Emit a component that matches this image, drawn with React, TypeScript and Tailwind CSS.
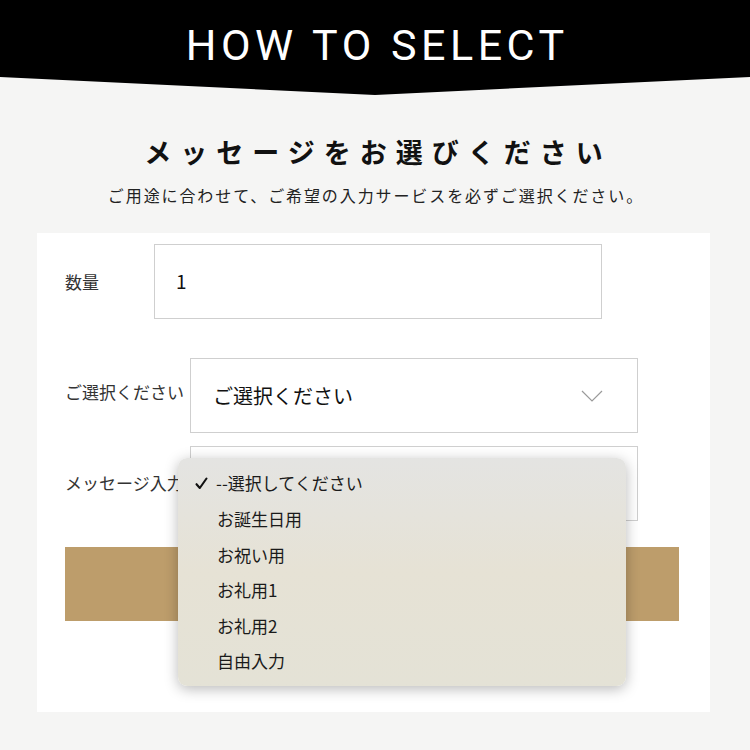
import React from "react";

const jp = { fontFamily: '"Noto Sans CJK JP", "Noto Sans", sans-serif' };

function Chevron() {
  return (
    <svg width="22" height="12" viewBox="0 0 22 12" fill="none">
      <path d="M1 1 L11 11 L21 1" stroke="#9a9a9a" strokeWidth="1.2" />
    </svg>
  );
}

function Check() {
  return (
    <svg width="13" height="13" viewBox="0 0 13 13" fill="none">
      <path d="M1.5 7.2 L4.8 11 L11.5 1.5" stroke="#111" strokeWidth="2.1" strokeLinecap="round" strokeLinejoin="round" />
    </svg>
  );
}

export default function App() {
  const options = ["お誕生日用", "お祝い用", "お礼用1", "お礼用2", "自由入力"];
  return (
    <div className="w-[750px] h-[750px] overflow-hidden bg-[#f5f5f4] relative" style={jp}>
      {/* header */}
      <div className="h-[95px] bg-black [clip-path:polygon(0_0,100%_0,100%_77px,50%_95px,0_77px)] flex justify-center">
        <div
          className="mt-[17px] h-[56px] leading-[56px] text-white text-[43px] tracking-[0.105em] pl-[0.105em]"
          style={{ fontFamily: 'Roboto, "Liberation Sans", sans-serif' }}
        >
          HOW TO SELECT
        </div>
      </div>

      <div className="mt-[39px] text-center text-[27px] leading-[36px] font-bold text-[#111] tracking-[9px] pl-[6px]">
        メッセージをお選びください
      </div>
      <div className="mt-[13px] text-center text-[16px] leading-[24px] text-[#222] tracking-[1.9px] pl-[1.9px]">
        ご用途に合わせて、ご希望の入力サービスを必ずご選択ください。
      </div>

      {/* panel */}
      <div className="relative mt-[26px] ml-[37px] w-[673px] h-[479px] bg-white pt-[11px] pl-[28px]">
        {/* row 1 */}
        <div className="flex items-center">
          <div className="w-[89px] text-[17px] text-[#333]">数量</div>
          <div className="w-[448px] h-[75px] border border-[#cfcfcf] bg-white flex items-center pl-[21px] text-[19px] text-[#111]">
            1
          </div>
        </div>

        {/* row 2 */}
        <div className="flex items-center mt-[39px]">
          <div className="w-[125px] text-[17px] text-[#333] whitespace-nowrap overflow-visible -mt-[8px]">ご選択ください</div>
          <div className="w-[448px] h-[75px] border border-[#cfcfcf] bg-white flex items-center justify-between pl-[22px] pr-[34px]">
            <span className="text-[20px] text-[#111]">ご選択ください</span>
            <Chevron />
          </div>
        </div>

        {/* row 3 */}
        <div className="flex items-center mt-[13px]">
          <div className="w-[125px] text-[17px] text-[#333] whitespace-nowrap overflow-hidden -mt-[2px]">メッセージ入力</div>
          <div className="w-[448px] h-[75px] border border-[#cfcfcf] bg-white"></div>
        </div>

        {/* button */}
        <div className="mt-[26px] w-[614px] h-[74px] bg-[#bd9d6b]"></div>

        {/* dropdown overlay */}
        <div className="absolute left-[141px] top-[225px] w-[448px] h-[228px] rounded-[9px] bg-gradient-to-b from-[#e4e4e2] via-[#e6e2d5] to-[#e4e2d6] shadow-[0_3px_14px_rgba(0,0,0,0.28)] pt-[7px]">
          <div className="h-[36px] flex items-center pl-[17px] text-[17px] text-[#1a1a1a]">
            <Check />
            <span className="ml-[8px]">--選択してください</span>
          </div>
          {options.map((o) => (
            <div key={o} className="h-[35.5px] flex items-center pl-[39px] text-[17px] text-[#1a1a1a]">
              {o}
            </div>
          ))}
        </div>
      </div>
    </div>
  );
}
